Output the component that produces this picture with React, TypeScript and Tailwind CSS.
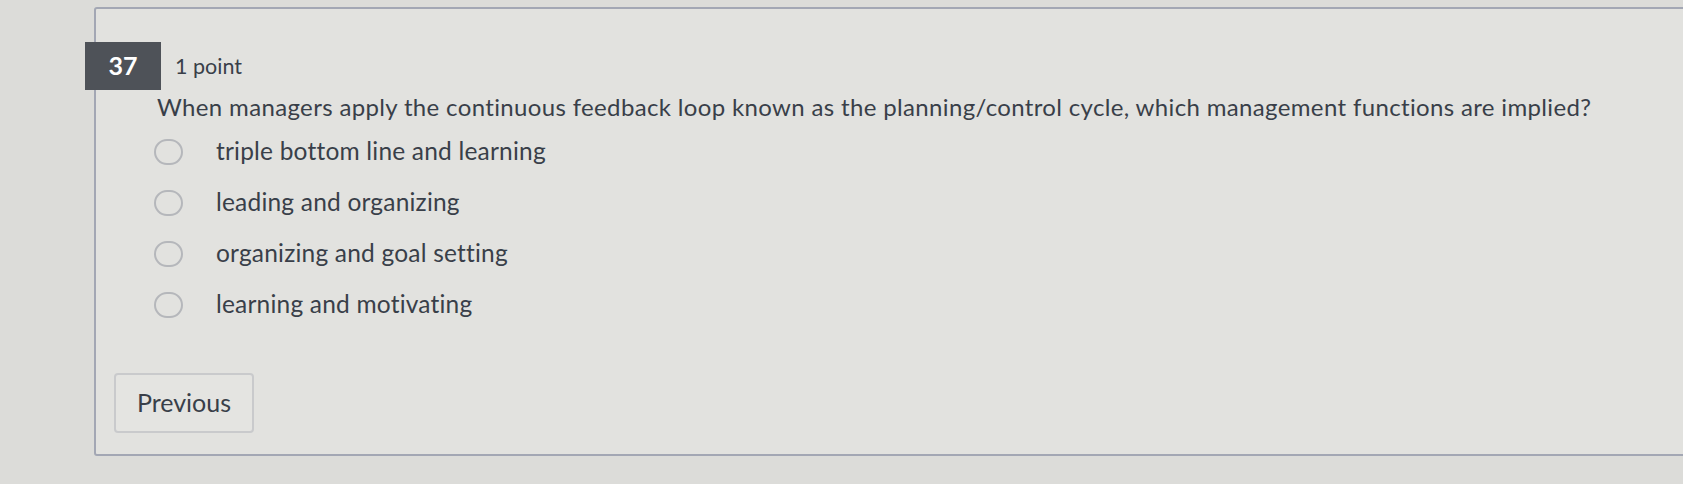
const options = [
  "triple bottom line and learning",
  "leading and organizing",
  "organizing and goal setting",
  "learning and motivating",
];

function Radio() {
  return <span className="h-[26px] w-[29px] shrink-0 rounded-full border-2 border-[#b5b7bb]" />;
}

export default function App() {
  return (
    <div className="h-[484px] w-[1683px] overflow-hidden bg-[#dcdcd9] pl-[94px] pt-[7px] font-['Lato','Liberation_Sans',sans-serif] text-[#393f49]">
      <div className="h-[449px] w-[1620px] rounded-[3px] border-2 border-[#a3a7b4] bg-[#e2e2df]">
        <div className="mt-[33px] flex items-center">
          <div className="-ml-[11px] flex h-[48px] w-[76px] items-center justify-center bg-[#4e5258] text-[25px] font-bold text-white">
            37
          </div>
          <span className="ml-[14px] text-[21.5px]">1 point</span>
        </div>

        <p className="ml-[61px] mt-[2px] text-[24px] leading-[30px] tracking-[0.35px]">
          When managers apply the continuous feedback loop known as the planning/control cycle, which management functions are implied?
        </p>

        <div className="ml-[58px] mt-[4px] flex flex-col">
          {options.map((option) => (
            <label key={option} className="flex h-[51px] items-center">
              <Radio />
              <span className="ml-[33px] text-[24.5px] tracking-[0.2px]">{option}</span>
            </label>
          ))}
        </div>

        <button className="ml-[18px] mt-[43px] h-[60px] w-[140px] rounded-[4px] border-2 border-[#c9cacc] bg-[#e4e4e1] text-[25px] text-[#393f49]">
          Previous
        </button>
      </div>
    </div>
  );
}
